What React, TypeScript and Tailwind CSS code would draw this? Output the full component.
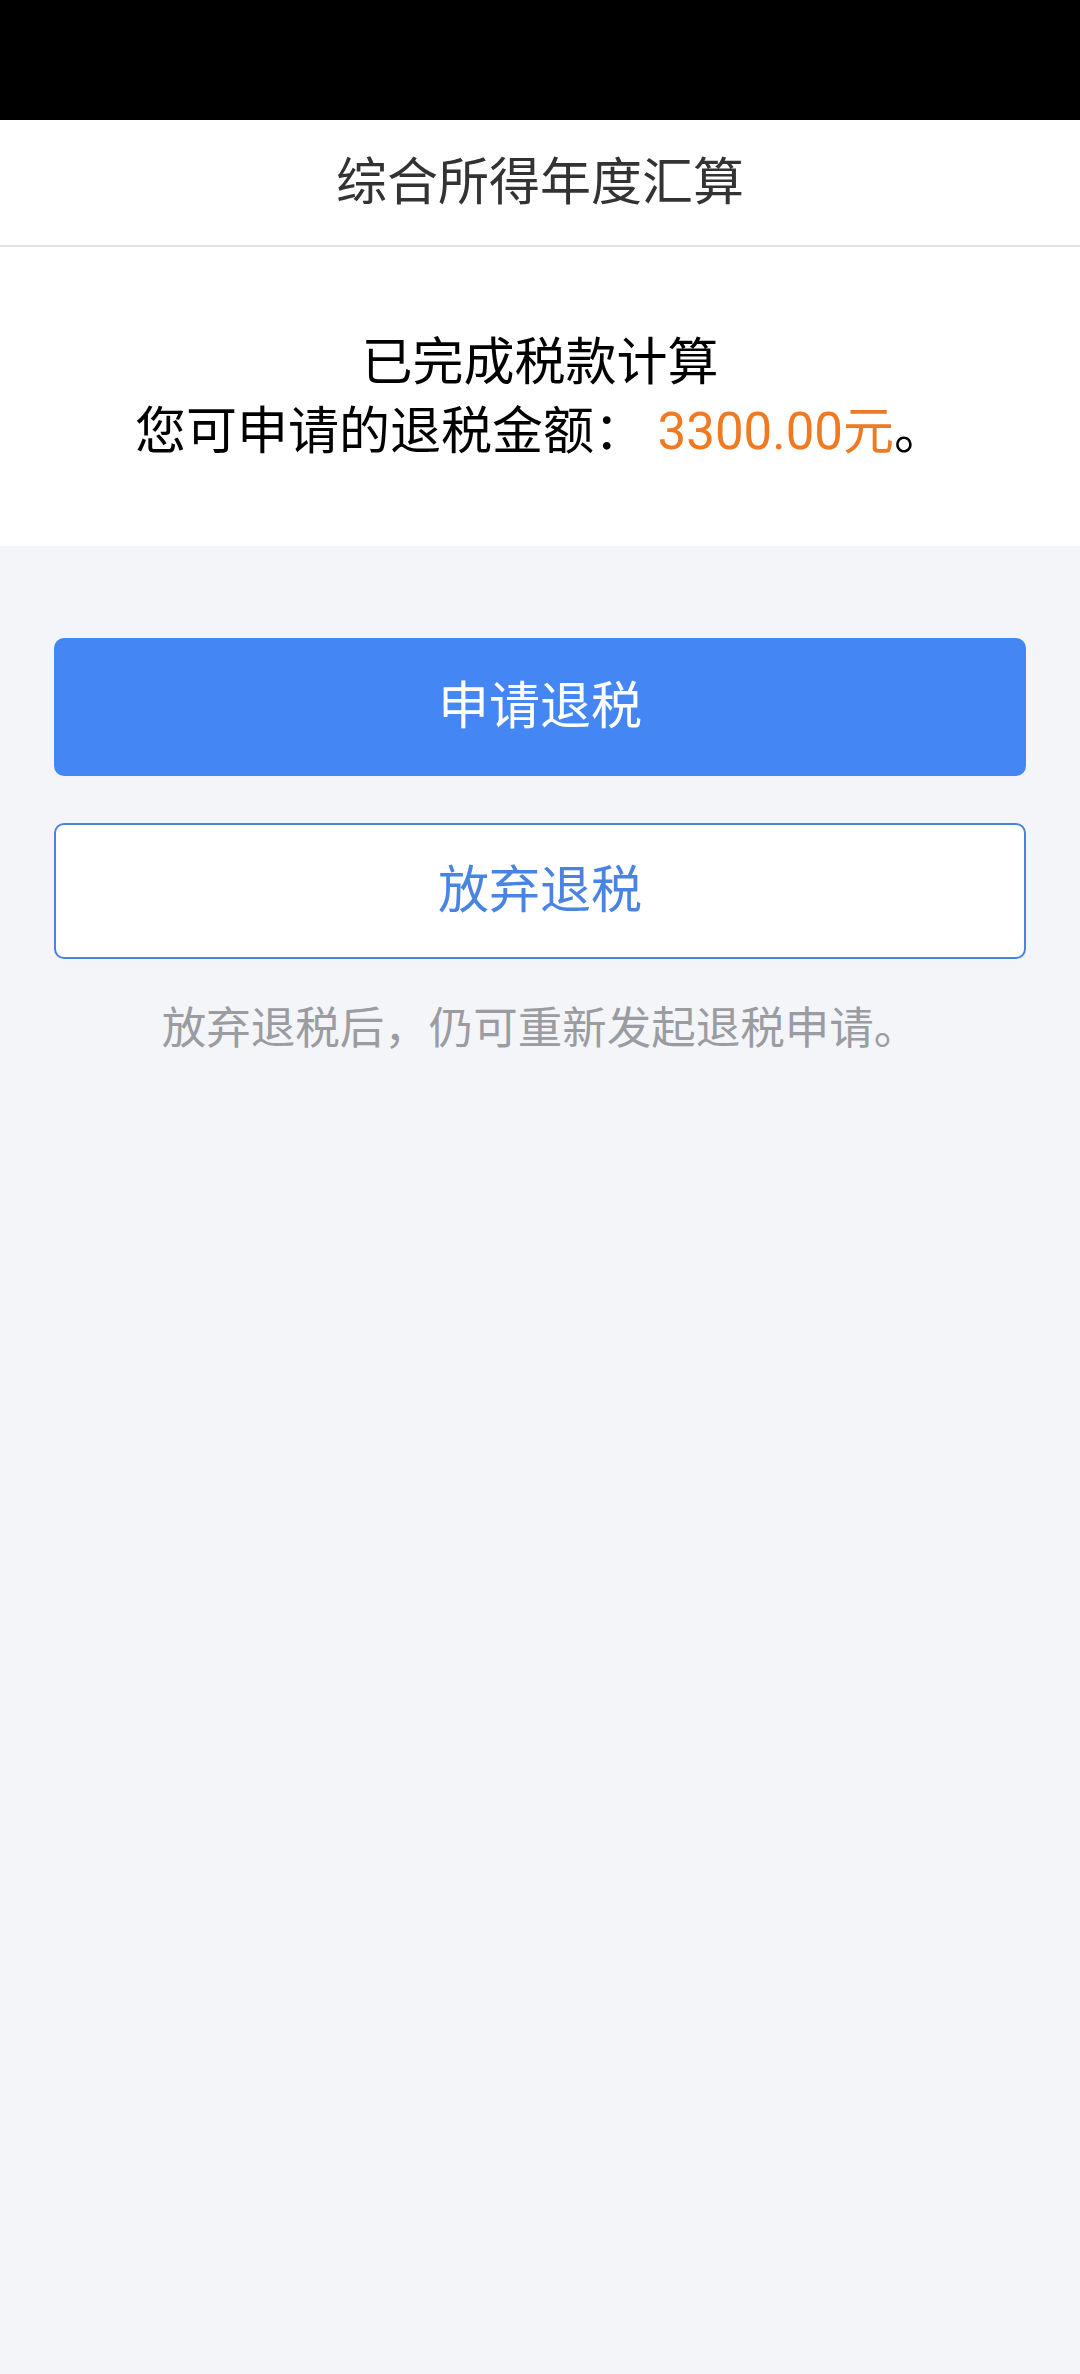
import React from 'react'

const font = { fontFamily: 'Roboto, "Noto Sans CJK SC", sans-serif' }

export default function App() {
  return (
    <div className="min-h-[2374px] w-[1080px] bg-[#f4f5f9] flex flex-col" style={font}>
      {/* status bar */}
      <div className="h-[120px] bg-black" />

      {/* header */}
      <div className="h-[127px] bg-white border-b-2 border-[#e3e3e3] flex items-center justify-center">
        <h1 className="text-[51px] leading-none text-[#333333]">综合所得年度汇算</h1>
      </div>

      {/* result */}
      <div className="h-[299px] bg-white flex flex-col items-center justify-center text-[51px] leading-[69px] text-black">
        <p>已完成税款计算</p>
        <p>
          您可申请的退税金额：<span className="text-[#f07a22]"> 3300.00元</span>。
        </p>
      </div>

      {/* actions */}
      <div className="px-[54px] pt-[92px] flex flex-col">
        <button className="h-[138px] rounded-[10px] bg-[#4386f4] text-white text-[51px]">申请退税</button>
        <button className="mt-[47px] h-[136px] rounded-[10px] bg-white border-2 border-[#4a82de] text-[#4a84e2] text-[51px]">
          放弃退税
        </button>
        <p className="mt-[46px] text-center text-[44.5px] leading-[48px] text-[#9a9ca1]">
          放弃退税后，仍可重新发起退税申请。
        </p>
      </div>
    </div>
  )
}
